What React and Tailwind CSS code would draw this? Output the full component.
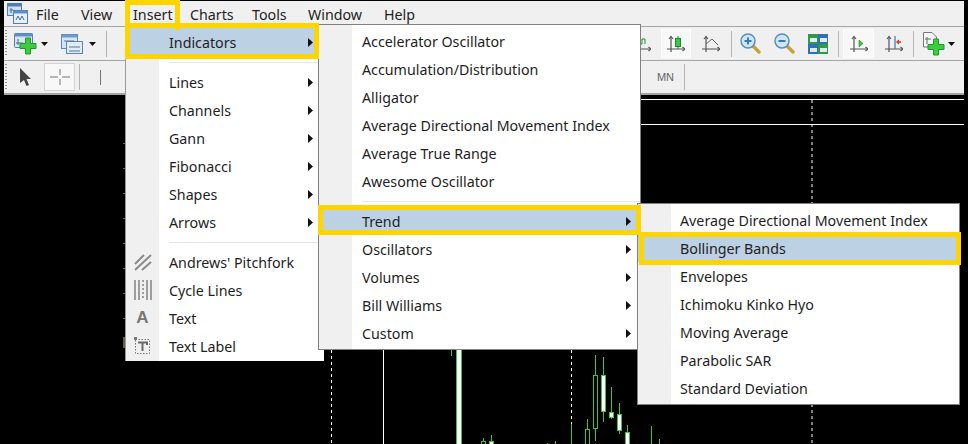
import React from "react";

const yellow = "absolute z-10 border-[5px] border-[#ffd500] pointer-events-none";

const Axes = () => (
  <g stroke="#555" strokeWidth="1.2" fill="none">
    <path d="M4 2V17M0 14H18" />
    <path d="M2 4L4 1.5L6 4M15.5 12L18 14L15.5 16" />
  </g>
);

const AppIcon = () => (
  <svg width="21" height="21" viewBox="0 0 21 21" className="block">
    <rect x="0.5" y="0.5" width="14" height="12" fill="#cfe0f2" stroke="#4f7fb5" />
    <rect x="0.5" y="0.5" width="14" height="3" fill="#4f7fb5" />
    <rect x="6.5" y="7.5" width="14" height="13" fill="#e6f0fa" stroke="#4f7fb5" />
    <rect x="6.5" y="7.5" width="14" height="3" fill="#5f8fc5" />
    <path d="M9 17L11 13L13 17L15 13L17 17" stroke="#47709f" fill="none" />
    <path d="M4 5V10M2.5 7H6.5" stroke="#47709f" />
  </svg>
);

const Plus = ({ x, y }) => (
  <path transform={`translate(${x} ${y})`} d="M-2.5 -8H2.5V-2.5H8V2.5H2.5V8H-2.5V2.5H-8V-2.5H-2.5Z" fill="#3ecb3e" stroke="#1c9a2a" />
);

const NewChart = () => (
  <svg width="23" height="22" viewBox="0 0 23 22" className="block">
    <rect x="0.5" y="0.5" width="18" height="14" rx="1" fill="#d7e6f5" stroke="#4f7fb5" />
    <rect x="0.5" y="0.5" width="18" height="3" fill="#5f8fc5" />
    <path d="M4 6V12M2 10H9" stroke="#4a6d91" />
    <Plus x={14} y={13} />
  </svg>
);

const Profiles = () => (
  <svg width="22" height="20" viewBox="0 0 22 20" className="block">
    <rect x="0.5" y="0.5" width="16" height="14" fill="#d7e6f5" stroke="#5a86b8" />
    <rect x="0.5" y="0.5" width="16" height="3" fill="#6f9bcb" />
    <rect x="5.5" y="7.5" width="16" height="12" fill="#e2ecf6" stroke="#5a86b8" />
    <path d="M3 7H13M8 13H19M8 17H19" stroke="#5a7590" />
  </svg>
);

const Arrow = () => (
  <svg width="7" height="4" viewBox="0 0 7 4" className="block"><path d="M0 0H7L3.5 4Z" fill="#111" /></svg>
);

const Candles = () => (
  <svg width="18" height="18" viewBox="0 0 18 18" className="block">
    <Axes />
    <path d="M11 1V14" stroke="#1c8f2c" />
    <rect x="8.5" y="3.5" width="5" height="8" fill="#36c844" stroke="#1c8f2c" />
  </svg>
);

const Bars = () => (
  <svg width="18" height="18" viewBox="0 0 18 18" className="block">
    <Axes />
    <path d="M6 9H9V4H12V9" stroke="#1c8f2c" fill="none" />
  </svg>
);

const LineChart = () => (
  <svg width="18" height="18" viewBox="0 0 18 18" className="block">
    <Axes />
    <path d="M4 9L10 4L16 10" stroke="#666" fill="none" />
  </svg>
);

const Zoom = ({ minus }) => (
  <svg width="21" height="21" viewBox="0 0 21 21" className="block">
    <path d="M13 13L19 19" stroke="#c9a13a" strokeWidth="3.4" strokeLinecap="round" />
    <circle cx="8" cy="8" r="7" fill="#cfe6f7" stroke="#5b8fb8" strokeWidth="1.5" />
    <path d={minus ? "M4.5 8H11.5" : "M4.5 8H11.5M8 4.5V11.5"} stroke="#3d78b5" strokeWidth="2" />
  </svg>
);

const Tile = () => (
  <svg width="20" height="20" viewBox="0 0 20 20" className="block">
    <rect x="0" y="0" width="10" height="10" fill="#2f9a45" />
    <rect x="10" y="0" width="10" height="10" fill="#2f6fb8" />
    <rect x="0" y="10" width="10" height="10" fill="#2f6fb8" />
    <rect x="10" y="10" width="10" height="10" fill="#2f9a45" />
    <rect x="2" y="4" width="7" height="4" fill="#dfeaf2" />
    <rect x="12" y="4" width="7" height="4" fill="#dfeaf2" />
    <rect x="2" y="14" width="7" height="4" fill="#dfeaf2" />
    <rect x="12" y="14" width="7" height="4" fill="#dfeaf2" />
  </svg>
);

const AutoScroll = () => (
  <svg width="18" height="18" viewBox="0 0 18 18" className="block">
    <Axes />
    <path d="M9 5L13 8.5L9 12Z" fill="#43c14f" stroke="#1c8f2c" strokeWidth="0.6" />
  </svg>
);

const ChartShift = () => (
  <svg width="18" height="18" viewBox="0 0 18 18" className="block">
    <Axes />
    <path d="M10 1V14" stroke="#3f7fc0" strokeWidth="1.3" />
    <path d="M16 7L12 7M14 5L12 7L14 9" stroke="#c8401c" strokeWidth="1.3" fill="none" />
  </svg>
);

const Template = () => (
  <svg width="22" height="24" viewBox="0 0 22 24" className="block">
    <path d="M0.5 0.5H9L13.5 5V15H0.5Z" fill="#f5f5f5" stroke="#777" />
    <path d="M4 5V12M2 7H8" stroke="#666" />
    <Plus x={13} y={15} />
  </svg>
);

const Grip = () => <div className="ml-px w-[2px] self-stretch my-[3px] bg-[repeating-linear-gradient(to_bottom,#8f8f8f_0,#8f8f8f_1px,transparent_1px,transparent_3px)]" />;
const Sep = ({ className }) => <div className={"w-px h-[26px] bg-[#b4b4b4] " + className} />;

const Triangle = () => (
  <svg width="5" height="9" viewBox="0 0 5 9" className="block"><path d="M0 0L5 4.5L0 9Z" fill="#111" /></svg>
);

const PitchforkIcon = () => (
  <svg width="18" height="17" viewBox="0 0 18 17" className="block">
    <path d="M1 10L10 1M1 16L17 1M8 16L17 8" stroke="#8a8a8a" strokeWidth="2" />
  </svg>
);

const CycleIcon = () => (
  <svg width="18" height="20" viewBox="0 0 18 20" className="block">
    <path d="M1 0V20M5 0V20M13 0V20M17 0V20" stroke="#7a7a7a" strokeWidth="1.4" />
    <path d="M9 0V20" stroke="#7a7a7a" strokeWidth="1.4" strokeDasharray="2 2" />
  </svg>
);

const TextLabelIcon = () => (
  <svg width="17" height="18" viewBox="0 0 17 18" className="block">
    <rect x="1.5" y="2.5" width="14" height="14" fill="none" stroke="#777" strokeDasharray="1.5 1.5" />
    <path d="M4 5.5H13V8M8.5 5.5V14" stroke="#6a6a6a" strokeWidth="2" fill="none" />
    <rect x="0" y="0" width="3" height="3" fill="#777" />
  </svg>
);

// one menu line: gutter cell + label + optional submenu arrow
const Row = ({ label, icon, arrow, active, gutter, arrowRight, children }) => (
  <div className={"relative flex items-center h-7 " + (active ? "bg-[#bdd1e4]" : "")}>
    <div className={"flex justify-center items-center shrink-0 " + gutter}>{icon}</div>
    <span className="ml-[10px] pt-[2px] whitespace-nowrap">{label}</span>
    {arrow && <div className={"ml-auto " + arrowRight}><Triangle /></div>}
    {children}
  </div>
);

const Divider = ({ gutter }) => (
  <div className={"h-3 flex items-center " + gutter}>
    <div className="w-full h-px bg-[#e6e6e6]" />
  </div>
);

const m1a = ["Lines", "Channels", "Gann", "Fibonacci", "Shapes", "Arrows"];
const m2a = ["Accelerator Oscillator", "Accumulation/Distribution", "Alligator", "Average Directional Movement Index", "Average True Range", "Awesome Oscillator"];
const m2b = ["Oscillators", "Volumes", "Bill Williams", "Custom"];
const m3 = ["Envelopes", "Ichimoku Kinko Hyo", "Moving Average", "Parabolic SAR", "Standard Deviation"];

const menuFont = "font-['Noto_Sans',sans-serif] text-[14.25px] text-[#1e1e1e]";

// chart candles: x, wick top, wick bottom, body top, body bottom, filled
const candles = [
  [483, 438, 444, 441, 444, false],
  [491, 435, 444, 441, 444, true],
  [587, 419, 444, 429, 444, false],
  [595, 355, 441, 375, 428, false],
  [603, 357, 422, 375, 411, true],
  [611, 387, 419, 412, 417, true],
  [619, 403, 434, 414, 430, true],
  [627, 425, 444, 432, 444, true],
];

const wicks = [[451, 350, 356], [547, 443, 444], [555, 441, 444], [571, 424, 444], [651, 426, 444], [659, 439, 444]];

const Chart = () => (
  <svg width="968" height="444" viewBox="0 0 968 444" className="absolute inset-0 block">
    <path d="M125 99.5H964M640 124.5H964" stroke="#fff" strokeWidth="1" />
    <path d="M812 100V203M812 404V444" stroke="#fff" strokeDasharray="3 3" />
    <path d="M331.5 350V444M571.5 350V424" stroke="#fff" strokeDasharray="3 3" />
    <path d="M383.5 350V444" stroke="#fff" />
    {[143, 168, 193, 218, 243, 268, 293, 318, 343].map(y => <rect key={y} x="123" y={y} width="2" height="1" fill="#666" />)}
    <rect x="123" y="337" width="2" height="11" fill="#6b5a4d" />
    <rect x="456.5" y="340" width="5" height="110" fill="#fff" stroke="#3fc24a" />
    {wicks.map(([x, a, b]) => <path key={x} d={`M${x + 0.5} ${a}V${b}`} stroke="#3fc24a" />)}
    {candles.map(([x, a, b, t, e, full]) => (
      <g key={x}>
        <path d={`M${x + 0.5} ${a}V${b}`} stroke="#3fc24a" />
        <rect x={x - 1.5} y={t + 0.5} width="4" height={e - t} fill={full ? "#fff" : "#000"} stroke="#3fc24a" />
      </g>
    ))}
  </svg>
);

const App = () => {
  return (
    <div className="relative w-[968px] h-[444px] bg-black overflow-hidden">
      <Chart />

      <div className="relative ml-[4px] mt-px w-[960px] bg-[#f0f0f0]">
        <div className={"flex items-center h-[26px] pt-[3px] border-b border-[#a5a5a5] " + menuFont}>
          <div className="ml-[3px] w-[29px] -mt-[3px]"><AppIcon /></div>
          <span className="w-[45px]">File</span>
          <span className="w-[52px]">View</span>
          <span className="w-[57px]">Insert</span>
          <span className="w-[62px]">Charts</span>
          <span className="w-[56px]">Tools</span>
          <span className="w-[76px]">Window</span>
          <span>Help</span>
        </div>

        <div className="flex items-center h-[34px] border-b border-[#a5a5a5]">
          <Grip />
          <div className="ml-[7px]"><NewChart /></div>
          <div className="ml-[4px]"><Arrow /></div>
          <div className="ml-[13px]"><Profiles /></div>
          <div className="ml-[6px]"><Arrow /></div>
          <Sep className="ml-[10px]" />
          <div className="ml-[auto] flex items-center mr-[9px]">
            <Bars />
            <div className="ml-[10px] w-[30px] h-[29px] flex items-center justify-center bg-[#f8f8f8] border border-white"><Candles /></div>
            <div className="ml-[11px]"><LineChart /></div>
            <Sep className="ml-[11px]" />
            <div className="ml-[8px]"><Zoom /></div>
            <div className="ml-[13px]"><Zoom minus /></div>
            <div className="ml-[13px]"><Tile /></div>
            <Sep className="ml-[10px]" />
            <div className="ml-[4px] w-[31px] h-[29px] flex items-center justify-center bg-[#f8f8f8] border border-white"><AutoScroll /></div>
            <div className="ml-[11px]"><ChartShift /></div>
            <Sep className="ml-[10px]" />
            <div className="ml-[9px]"><Template /></div>
            <div className="ml-[3px]"><Arrow /></div>
          </div>
        </div>

        <div className="flex items-center h-[34px] border-b-2 border-[#a5a5a5]">
          <Grip />
          <svg width="11" height="18" viewBox="0 0 11 18" className="block ml-[13px]"><path d="M0 0L11 11H6.5L9 17L6.5 18L4 12L0 15Z" fill="#444" /></svg>
          <div className="ml-[13px] w-[31px] h-[28px] flex items-center justify-center bg-[#f8f8f8] border border-[#d2d2d2]">
            <svg width="20" height="16" viewBox="0 0 20 16" className="block"><path d="M0 8H8M12 8H20M10 0V6M10 10V16" stroke="#777" /></svg>
          </div>
          <Sep className="ml-[4px]" />
          <div className="ml-[20px] w-px h-[15px] bg-[#777]" />
          <div className="ml-auto flex items-center mr-[279px]">
            <span className="font-['Liberation_Sans',sans-serif] text-[11px] text-[#666]">MN</span>
            <Sep className="ml-[10px]" />
          </div>
        </div>
      </div>

      <div className={"absolute left-[125px] top-0 w-[55px] h-[30px] " + yellow + " border-b-0"} />

      {/* Insert menu */}
      <div className={"absolute left-[125px] top-[25px] w-[199px] h-[336px] pt-[3px] border-l border-[#9a9a9a] bg-[linear-gradient(to_right,#f0f0f0_33px,#fff_33px)] " + menuFont}>
        <div className="mr-[4px]">
          <Row label="Indicators" gutter="w-[33px]" active arrow arrowRight="mr-[7px]">
            <div className={yellow + " -left-px -top-[5px] w-[194px] h-[36px]"} />
          </Row>
        </div>
        <Divider gutter="ml-[43px]" />
        {m1a.map(l => <Row key={l} label={l} gutter="w-[33px]" arrow arrowRight="mr-[11px]" />)}
        <Divider gutter="ml-[43px]" />
        <Row label="Andrews' Pitchfork" gutter="w-[33px]" icon={<PitchforkIcon />} />
        <Row label="Cycle Lines" gutter="w-[33px]" icon={<CycleIcon />} />
        <Row label="Text" gutter="w-[33px]" icon={<span className="font-['Liberation_Sans',sans-serif] font-bold text-[17px] text-[#777]">A</span>} />
        <Row label="Text Label" gutter="w-[33px]" icon={<TextLabelIcon />} />
      </div>

      {/* Indicators menu */}
      <div className={"absolute left-[318px] top-[24px] w-[323px] h-[326px] pt-[2px] border border-[#808080] bg-[linear-gradient(to_right,#f0f0f0_33px,#fff_33px)] " + menuFont}>
        {m2a.map(l => <Row key={l} label={l} gutter="w-[33px]" />)}
        <Divider gutter="ml-[43px]" />
        <Row label="Trend" gutter="w-[33px]" active arrow arrowRight="mr-[9px]">
          <div className={yellow + " -left-px -top-[2px] w-[323px] h-[30px]"} />
        </Row>
        {m2b.map(l => <Row key={l} label={l} gutter="w-[33px]" arrow arrowRight="mr-[9px]" />)}
      </div>

      {/* Trend menu */}
      <div className={"absolute left-[637px] top-[203px] w-[323px] h-[202px] pt-[2px] border border-[#808080] bg-[linear-gradient(to_right,#f0f0f0_33px,#fff_33px)] " + menuFont}>
        <Row label="Average Directional Movement Index" gutter="w-[32px]" />
        <Row label="Bollinger Bands" gutter="w-[32px]" active>
          <div className={yellow + " left-px -top-[2px] w-[322px] h-[33px]"} />
        </Row>
        {m3.map(l => <Row key={l} label={l} gutter="w-[32px]" />)}
      </div>
    </div>
  );
};

export default App;
